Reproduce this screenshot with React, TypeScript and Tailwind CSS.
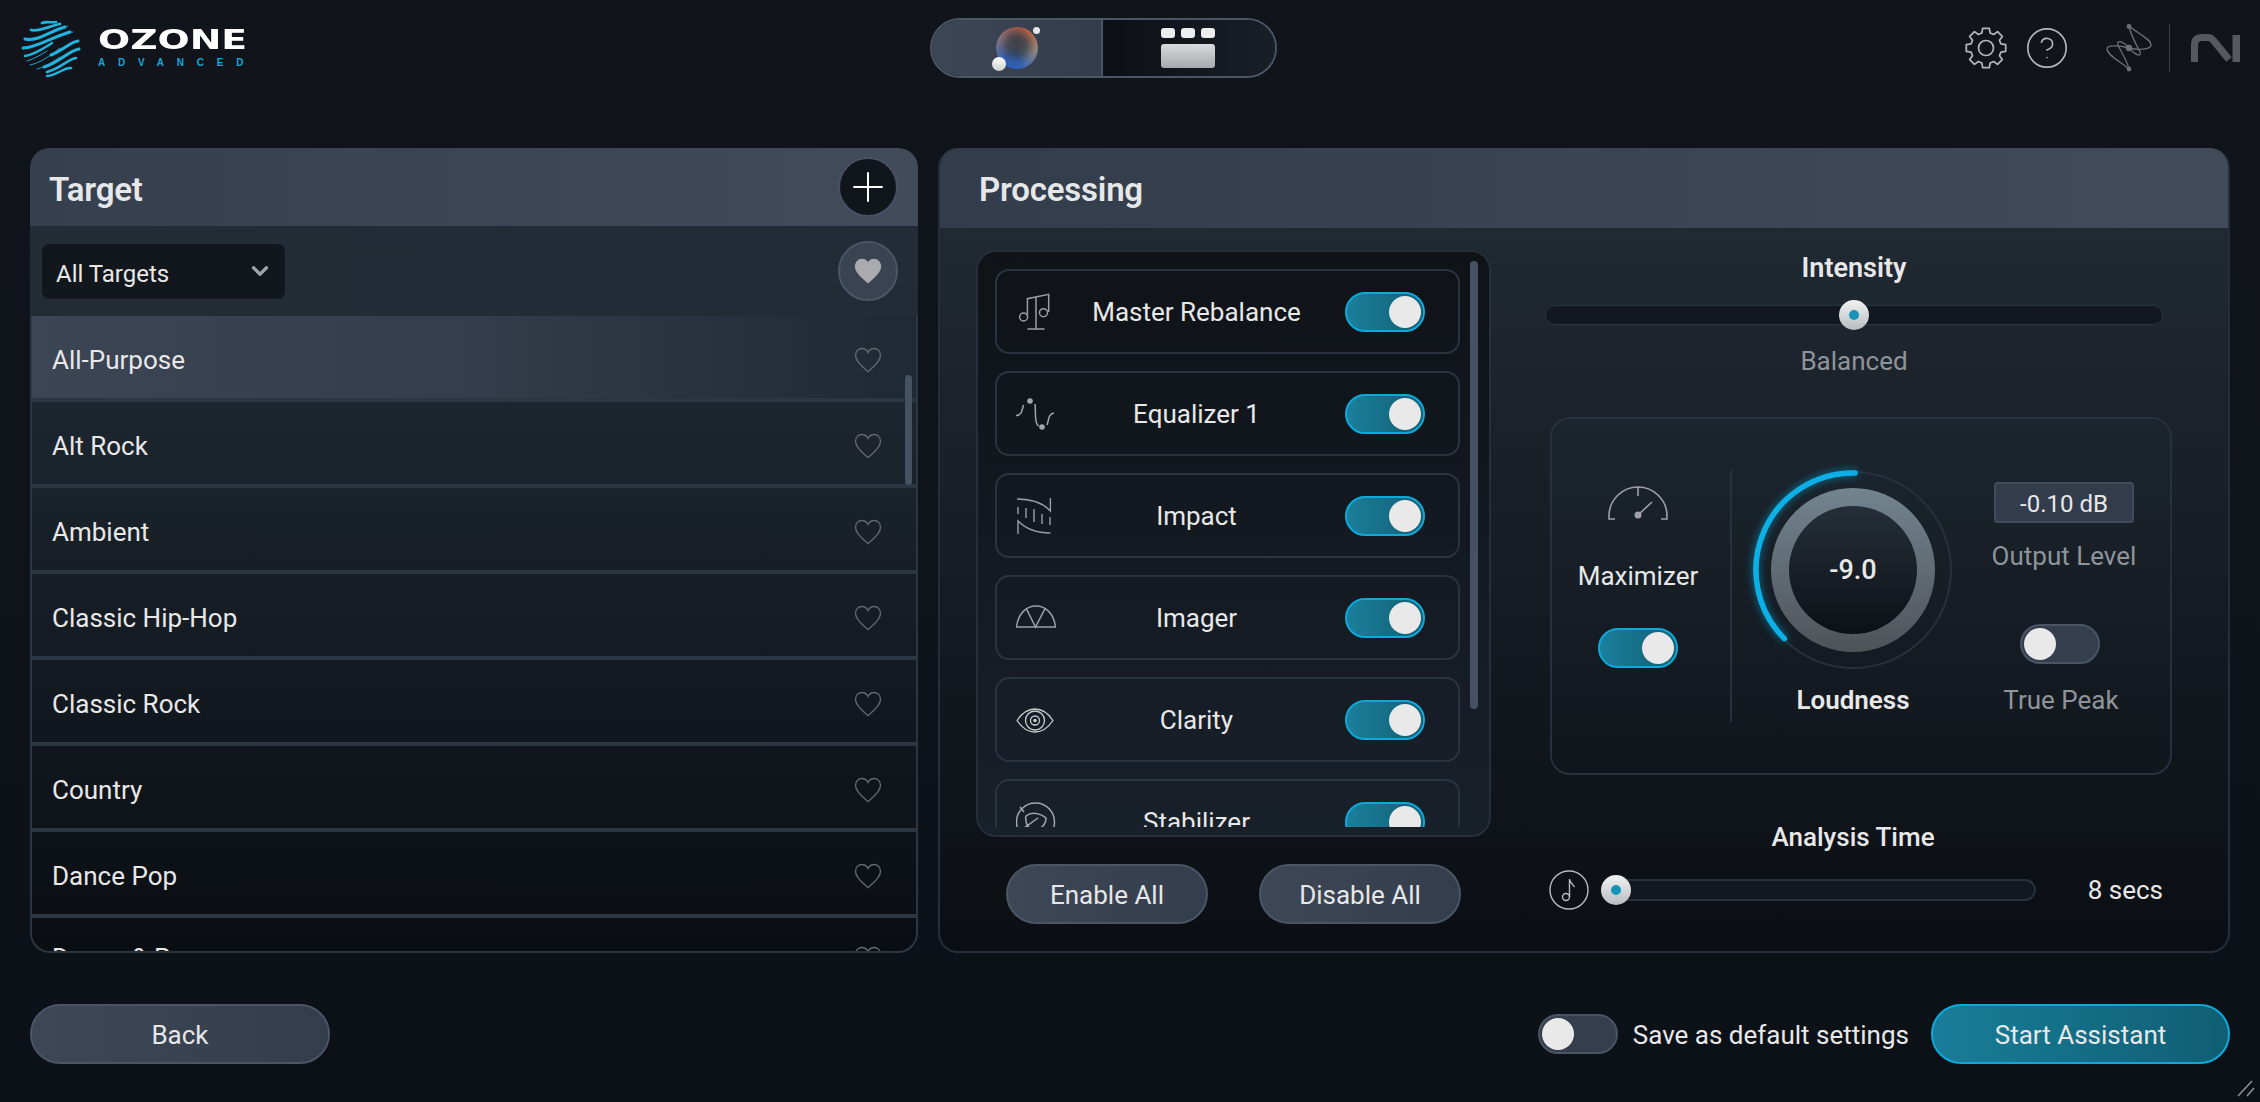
import { CircleHelp, ChevronDown, Plus } from "lucide-react";
import type { ReactNode } from "react";

const TARGETS = ["Alt Rock", "Ambient", "Classic Hip-Hop", "Classic Rock", "Country", "Dance Pop"];

function Toggle({ on = true }: { on?: boolean }) {
  return on ? (
    <div className="flex h-10 w-20 shrink-0 items-center justify-end rounded-full border-2 border-[#0ea9da] bg-gradient-to-r from-[#1b7f9b] to-[#125f75] pr-[2px]">
      <div className="size-8 rounded-full bg-[#e9e9e9]" />
    </div>
  ) : (
    <div className="flex h-10 w-20 shrink-0 items-center justify-start rounded-full border-2 border-[#495464] bg-[#353e4c] pl-[2px]">
      <div className="size-8 rounded-full bg-[#e9e9e9]" />
    </div>
  );
}

function Thumb() {
  return (
    <div className="flex size-[30px] shrink-0 items-center justify-center rounded-full bg-gradient-to-b from-[#f2f2f2] to-[#b9bdc1]">
      <div className="size-[10px] rounded-full bg-[#1793b8]" />
    </div>
  );
}

function PillButton({ children, w }: { children: ReactNode; w: string }) {
  return (
    <button className={`h-[60px] rounded-full border-2 border-[#4a5566] bg-gradient-to-r from-[#3e4755] to-[#343d4b] pt-[3px] text-[#e6e7e8] ${w}`}>
      {children}
    </button>
  );
}

function Heart({ filled = false }: { filled?: boolean }) {
  return (
    <svg width="28" height="26" viewBox="0 0 28 26" fill={filled ? "#a9abae" : "none"} stroke={filled ? "#a9abae" : "#62676d"} strokeWidth="1.4">
      <path d="M14 24.5C10 21 1.5 15 1.5 8.2C1.5 4.3 4.4 1.5 7.8 1.5C10.4 1.5 12.8 3 14 5.4C15.2 3 17.6 1.5 20.2 1.5C23.6 1.5 26.5 4.3 26.5 8.2C26.5 15 18 21 14 24.5Z" />
    </svg>
  );
}

function OzoneLogo() {
  return (
    <svg width="70" height="62" viewBox="17 17 70 62" fill="none" stroke="#22b4df" strokeLinecap="round">
      <path d="M42 22C47 20 51 22 56 21" strokeWidth="2.6" />
      <path d="M31 29C38 31 47 26 60 23" strokeWidth="2.8" />
      <path d="M25 38C38 41 50 30 65 26" strokeWidth="3" />
      <path d="M23 47C36 47 50 37 70 31" strokeWidth="3" />
      <path d="M25 55C36 53 44 47 52 42" strokeWidth="2.4" />
      <path d="M27 60C36 57 42 53 47 50" strokeWidth="0.9" />
      <path d="M48 33C58 28 63 26 68 25" strokeWidth="0.8" />
      <path d="M55 37C62 33 68 31 73 31" strokeWidth="0.8" />
      <path d="M30 64C40 62 50 55 60 47" strokeWidth="0.9" />
      <path d="M78 40C70 41 62 50 51 54" strokeWidth="3" />
      <path d="M79 48C68 50 60 61 44 66" strokeWidth="3" />
      <path d="M76 57C68 58 60 68 47 71" strokeWidth="2.6" />
      <path d="M71 67C64 66 58 74 47 75" strokeWidth="2.4" />
      <path d="M37 68C46 66 54 60 60 56" strokeWidth="0.8" />
    </svg>
  );
}

function gearPath() {
  const cx = 21;
  const cy = 21;
  const pts: string[] = [];
  for (let i = 0; i < 8; i++) {
    const a = (i * Math.PI) / 4 - Math.PI / 2;
    const p = (r: number, d: number) => `${(cx + r * Math.cos(a + d)).toFixed(2)} ${(cy + r * Math.sin(a + d)).toFixed(2)}`;
    pts.push(`${i === 0 ? "M" : "L"}${p(15.5, -0.27)}`);
    pts.push(`L${p(20, -0.17)}`);
    pts.push(`L${p(20, 0.17)}`);
    pts.push(`L${p(15.5, 0.27)}`);
  }
  return pts.join("") + "Z";
}

function GearIcon() {
  return (
    <svg width="42" height="42" viewBox="0 0 42 42" fill="none" stroke="#b4b6b8" strokeWidth="1.7" strokeLinejoin="round">
      <path d={gearPath()} />
      <circle cx="21" cy="21" r="7.5" />
    </svg>
  );
}

function SwirlIcon() {
  return (
    <svg width="48" height="48" viewBox="0 0 48 48" fill="none" stroke="#6c6f73" strokeWidth="1.3">
      <path d="M24 2C32 9 46 15 46 21C46 26 32 26 24 24C16 22 2 20 2 25C2 31 16 38 24 45" />
      <path d="M24 2C26 12 32 22 35 28C37 33 31 32 24 24C17 16 11 16 13 21C16 28 22 36 24 45" />
      <circle cx="24" cy="2.5" r="2.4" fill="#6c6f73" stroke="none" />
      <circle cx="24" cy="45" r="2.4" fill="#6c6f73" stroke="none" />
      <circle cx="24" cy="24" r="3.2" fill="#6c6f73" stroke="none" />
    </svg>
  );
}

function NiLogo() {
  return (
    <svg width="49" height="28" viewBox="0 0 49 28" fill="none">
      <path d="M3.5 28V11C3.5 6 6 3.5 11 3.5H17C19.5 3.5 21 4.5 22.5 6.5L38 25.5" stroke="#55585e" strokeWidth="7" />
      <rect x="41.5" y="1" width="7.5" height="27" fill="#55585e" />
    </svg>
  );
}

function IconMaster() {
  return (
    <svg width="40" height="40" viewBox="0 0 40 40" fill="none" stroke="#9a9ea3" strokeWidth="1.5">
      <circle cx="7.6" cy="25" r="4" />
      <circle cx="27.5" cy="20.7" r="4" />
      <path d="M11.4 24V6.7L32.7 2.3V20M20 5V37M11.4 37H28.6" />
    </svg>
  );
}

function IconEq() {
  return (
    <svg width="40" height="40" viewBox="0 0 40 40" fill="none" stroke="#a4a8ac" strokeWidth="1.5">
      <path d="M0 21.5C6 21.5 6 16 7.5 11M19 10C20 16 18 30 22.5 32M31 31C33 26 32 20 38 19" />
      <circle cx="14" cy="7" r="2.8" fill="#a4a8ac" stroke="none" />
      <circle cx="26" cy="33" r="2.8" fill="#a4a8ac" stroke="none" />
    </svg>
  );
}

function IconImpact() {
  return (
    <svg width="40" height="40" viewBox="0 0 40 40" fill="none" stroke="#9a9ea3" strokeWidth="1.4">
      <path d="M1 3C14 3 26 6 34.4 15V2M2 38V25C10 33 22 37 34.4 37" />
      <path d="M2 11V18M10 12V22M18 13V26M26 18V28M34 21V29" />
    </svg>
  );
}

function IconImager() {
  return (
    <svg width="40" height="40" viewBox="0 0 40 40" fill="none" stroke="#9a9ea3" strokeWidth="1.5">
      <path d="M0.5 29H39.5C38 16 30 8 20 8C10 8 2 16 0.5 29ZM10.3 10.7L19.5 29L29 10.7" />
    </svg>
  );
}

function IconClarity() {
  return (
    <svg width="40" height="40" viewBox="0 0 40 40" fill="none" stroke="#c9cbcd" strokeWidth="1.3">
      <path d="M1 20.5C6 13 12 9 19 9C26 9 32 13 37 20.5C32 28 26 32 19 32C12 32 6 28 1 20.5Z" />
      <circle cx="19" cy="20.5" r="9.5" />
      <circle cx="19" cy="20.5" r="4.5" />
      <circle cx="19" cy="20.5" r="1.8" fill="#c9cbcd" stroke="none" />
    </svg>
  );
}

function IconStabilizer() {
  return (
    <svg width="40" height="40" viewBox="0 0 40 40" fill="none" stroke="#a4a8ac" strokeWidth="1.5">
      <path d="M4 5L8 10" />
      <circle cx="19.5" cy="20" r="19" />
      <path d="M10 14C16 9 26 12 30 16C30 24 22 30 15 27C11 25 9 19 10 14ZM8 26L22 16" />
    </svg>
  );
}

function IconGauge() {
  return (
    <svg width="60" height="34" viewBox="0 0 60 34" fill="none" stroke="#9da1a6" strokeWidth="1.6">
      <path d="M7 33H1V30C1 14 14 1 30 1C46 1 59 14 59 30V33H53M30 1V10M30 29L44 16" />
      <circle cx="30" cy="29" r="3.5" fill="#9da1a6" stroke="none" />
    </svg>
  );
}

function IconNote() {
  return (
    <svg width="40" height="40" viewBox="0 0 40 40" fill="none" stroke="#b9bbbd" strokeWidth="1.4" className="shrink-0">
      <circle cx="20" cy="20" r="19" />
      <circle cx="17" cy="27" r="3.5" />
      <path d="M20.5 27V9C21 13 24 14 25.5 17" />
    </svg>
  );
}

function Knob() {
  return (
    <div className="relative flex size-[200px] shrink-0 items-center justify-center">
      <svg width="200" height="200" viewBox="0 0 200 200" fill="none" className="absolute inset-0 overflow-visible">
        <defs>
          <linearGradient id="metal" x1="0" y1="0" x2="0" y2="1">
            <stop offset="0" stopColor="#72848f" />
            <stop offset="1" stopColor="#4f5358" />
          </linearGradient>
          <linearGradient id="cap" x1="0" y1="0" x2="0" y2="1">
            <stop offset="0" stopColor="#252e38" />
            <stop offset="1" stopColor="#0c1116" />
          </linearGradient>
          <filter id="glow" x="-30%" y="-30%" width="160%" height="160%">
            <feGaussianBlur stdDeviation="4" />
          </filter>
        </defs>
        <circle cx="100" cy="100" r="98" stroke="#27313d" strokeWidth="2" />
        <path d="M31.4 168.6A97 97 0 0 1 102 3" stroke="#0cb0e6" strokeWidth="6" strokeLinecap="round" filter="url(#glow)" opacity="0.6" />
        <path d="M31.4 168.6A97 97 0 0 1 102 3" stroke="#0cb0e6" strokeWidth="5.5" strokeLinecap="round" />
        <circle cx="100" cy="100" r="82" fill="url(#metal)" />
        <circle cx="100" cy="100" r="64" fill="url(#cap)" />
      </svg>
      <span className="relative text-[27px] font-medium text-[#e8e8e8]">-9.0</span>
    </div>
  );
}

const MODULES = [
  { name: "Master Rebalance", icon: <IconMaster /> },
  { name: "Equalizer 1", icon: <IconEq /> },
  { name: "Impact", icon: <IconImpact /> },
  { name: "Imager", icon: <IconImager /> },
  { name: "Clarity", icon: <IconClarity /> },
  { name: "Stabilizer", icon: <IconStabilizer /> },
];

export default function App() {
  return (
    <div className="relative flex h-[1102px] w-[2260px] flex-col overflow-hidden bg-gradient-to-b from-[#11151b] to-[#0c1118] font-['Roboto',sans-serif] text-[26px] text-[#e8e8e8]">
      {/* top bar */}
      <header className="flex h-[148px] shrink-0 items-start">
        <div className="flex w-[930px] shrink-0 items-start pl-[17px] pt-[18px]">
          <OzoneLogo />
          <div className="ml-[11px] flex flex-col pt-[8px]">
            <span className="origin-left scale-x-[1.4] font-['DejaVu_Sans',sans-serif] text-[27px] leading-[28px] font-bold text-white">OZONE</span>
            <span className="mt-[2px] font-['Liberation_Sans',sans-serif] text-[10px] leading-[14px] font-bold tracking-[12.8px] text-[#12a7d8]">ADVANCED</span>
          </div>
        </div>

        <div className="mt-[18px] flex h-[60px] w-[347px] shrink-0 overflow-hidden rounded-full border-2 border-[#4a5566]">
          <div className="flex w-[171px] items-center justify-center border-r-2 border-[#4a5566] bg-gradient-to-r from-[#3d4654] to-[#333c4a]">
            <div className="relative size-[42px]">
              <div className="size-full rounded-full bg-[conic-gradient(from_30deg,#d0693f_0deg,#8a8780_70deg,#2f5fb5_140deg,#2f5fb5_200deg,#8c7680_270deg,#b85a3f_340deg,#d0693f_360deg)]" />
              <div className="absolute inset-0 rounded-full bg-[radial-gradient(circle_at_50%_42%,#39404c_0%,#39404cd0_28%,transparent_60%)]" />
              <div className="absolute bottom-[-2px] left-[-4px] size-[14px] rounded-full bg-gradient-to-b from-white to-[#cfcfcf]" />
              <div className="absolute right-[-2px] top-0 size-[7px] rounded-full bg-[#e6e6e6]" />
            </div>
          </div>
          <div className="flex flex-1 items-center justify-center bg-gradient-to-r from-[#0c1015] to-[#191f27] pr-[2px]">
            <div className="flex w-[54px] flex-col gap-[6px]">
              <div className="flex justify-between">
                <div className="h-[10px] w-[14px] rounded-[3px] bg-[#eceded]" />
                <div className="h-[10px] w-[14px] rounded-[3px] bg-[#eceded]" />
                <div className="h-[10px] w-[14px] rounded-[3px] bg-[#eceded]" />
              </div>
              <div className="h-[24px] rounded-[3px] bg-gradient-to-b from-[#d9dbdd] to-[#a7aaad]" />
            </div>
          </div>
        </div>

        <div className="flex flex-1 items-center justify-end gap-[17px] pr-[20px] pt-[24px]">
          <GearIcon />
          <CircleHelp size={46} strokeWidth={0.85} color="#b4b6b8" />
          <div className="ml-[18px]">
            <SwirlIcon />
          </div>
          <div className="-mx-px h-[48px] w-px bg-[#3b3e43]" />
          <div className="ml-[5px]">
            <NiLogo />
          </div>
        </div>
      </header>

      {/* panels */}
      <main className="flex h-[805px] shrink-0 gap-[20px] pl-[30px] pr-[30px]">
        <section className="flex w-[888px] shrink-0 flex-col overflow-hidden rounded-[20px] bg-[#232c36]">
          <div className="flex h-[78px] shrink-0 items-center justify-between bg-gradient-to-r from-[#363f4d] to-[#414b59] pl-[19px] pr-[20px]">
            <span className="pt-[5px] text-[33px] font-semibold tracking-[-0.2px] text-[#e6e7e8]">Target</span>
            <div className="flex size-[60px] items-center justify-center rounded-full border-2 border-[#465264] bg-[#11161d]">
              <Plus size={48} strokeWidth={1} color="#ffffff" />
            </div>
          </div>
          <div className="flex h-[90px] shrink-0 items-center justify-between bg-gradient-to-r from-[#222c35] to-[#232c36] pl-[11px] pr-[20px]">
            <div className="flex h-[57px] w-[245px] items-center justify-between rounded-[8px] border border-[#262f3a] bg-[#12171e] pl-[14px] pr-[12px]">
              <span className="pt-[5px] text-[24px]">All Targets</span>
              <ChevronDown size={26} strokeWidth={3} color="#a0a3a8" />
            </div>
            <div className="flex size-[60px] items-center justify-center rounded-full border-2 border-[#4a5566] bg-[#3a4352]">
              <Heart filled />
            </div>
          </div>

          <div className="relative flex min-h-0 flex-1 flex-col overflow-hidden rounded-b-[20px] border-x-2 border-b-2 border-[#2b3643] bg-gradient-to-b from-[#202a33] to-[#0a0e13]">
            <div className="flex h-[86px] shrink-0 items-center justify-between border-b-4 border-[#2b3643] bg-gradient-to-r from-[#3b4554] via-[#333d4b] to-[#1f2933] pl-[20px] pr-[34px] pt-[6px]">
              <span>All-Purpose</span>
              <Heart />
            </div>
            {TARGETS.map((t) => (
              <div key={t} className="flex h-[86px] shrink-0 items-center justify-between border-b-4 border-[#2b3643] pl-[20px] pr-[34px] pt-[6px]">
                <span>{t}</span>
                <Heart />
              </div>
            ))}
            {/* next row, only the top edge shows above the panel's end */}
            <div className="flex h-[86px] shrink-0 items-center justify-between pb-[5px] pl-[20px] pr-[34px]">
              <span>Dance &amp; Pop</span>
              <Heart />
            </div>
            <div className="absolute right-[4px] top-[59px] h-[110px] w-[7px] rounded-full bg-[#465264]" />
          </div>
        </section>

        <section className="flex min-w-0 flex-1 flex-col overflow-hidden rounded-[20px] border-2 border-t-0 border-[#252e39] bg-gradient-to-b from-[#232c36] to-[#0b0f14]">
          <div className="flex h-[80px] shrink-0 items-center bg-gradient-to-r from-[#333c4a] to-[#414b59] pl-[39px]">
            <span className="pt-[4px] text-[33px] font-semibold tracking-[-0.2px] text-[#e6e7e8]">Processing</span>
          </div>
          <div className="flex min-h-0 flex-1">
            {/* module list */}
            <div className="ml-[36px] mt-[22px] flex w-[515px] shrink-0 flex-col">
              <div className="relative h-[587px] overflow-hidden rounded-[20px] border-2 border-[#252e39] bg-gradient-to-b from-[#0f1318] to-[#18202a] pb-[10px] pl-[17px] pt-[17px]">
                <div className="flex h-[558px] w-[465px] flex-col gap-[17px] overflow-hidden">
                  {MODULES.map((m) => (
                    <div key={m.name} className="flex h-[85px] shrink-0 items-center rounded-[14px] border-2 border-[#2a3340] pl-[19px] pr-[33px]">
                      <div className="-mr-2 w-10 shrink-0">{m.icon}</div>
                      <span className="flex-1 pt-[2px] text-center">{m.name}</span>
                      <Toggle />
                    </div>
                  ))}
                </div>
                <div className="absolute right-[11px] top-[9px] h-[448px] w-[8px] rounded-full bg-[#465264]" />
              </div>
              <div className="mt-[27px] flex justify-between pl-[30px] pr-[30px]">
                <PillButton w="w-[202px]">Enable All</PillButton>
                <PillButton w="w-[202px]">Disable All</PillButton>
              </div>
            </div>

            {/* right column */}
            <div className="ml-[54px] flex w-[627px] shrink-0 flex-col items-start">
              <div className="mt-[26px] w-[618px] text-center text-[27px] font-semibold leading-[28px] text-[#e8e8e8]">Intensity</div>
              <div className="mt-[23px] flex h-5 w-[618px] items-center justify-center rounded-full border border-[#2a3440] bg-[#12181f]">
                <Thumb />
              </div>
              <div className="mt-[22px] w-[618px] text-center leading-[28px] text-[#8f949b]">Balanced</div>

              <div className="ml-[5px] mt-[42px] flex h-[358px] w-[622px] shrink-0 items-start rounded-[20px] border-2 border-[#27313d] bg-gradient-to-b from-[#1c252e] to-[#11161c]">
                <div className="mr-[6px] flex w-[172px] shrink-0 flex-col items-center pt-[67px]">
                  <IconGauge />
                  <span className="mt-[42px] leading-[28px]">Maximizer</span>
                  <div className="mt-[38px]">
                    <Toggle />
                  </div>
                </div>
                <div className="mt-[51px] h-[252px] w-[2px] shrink-0 bg-[#27313d]" />
                <div className="ml-[21px] mt-[51px] flex shrink-0 flex-col items-center">
                  <Knob />
                  <span className="mt-[16px] font-semibold leading-[28px]">Loudness</span>
                </div>
                <div className="ml-[41px] mt-[63px] flex w-[140px] shrink-0 flex-col items-center">
                  <div className="flex h-[41px] w-[140px] items-center justify-center rounded-[4px] border-2 border-[#414b5a] bg-[#333c4a] pt-[2px] text-[24px]">-0.10 dB</div>
                  <span className="mt-[19px] whitespace-nowrap leading-[28px] text-[#8f949b]">Output Level</span>
                  <div className="mr-[8px] mt-[54px]">
                    <Toggle on={false} />
                  </div>
                  <span className="mr-[6px] mt-[22px] whitespace-nowrap leading-[28px] text-[#8f949b]">True Peak</span>
                </div>
              </div>

              <div className="mt-[48px] w-[616px] text-center font-medium leading-[28px]">Analysis Time</div>
              <div className="mt-[19px] flex w-[618px] items-center pl-[4px]">
                <IconNote />
                <div className="ml-[12px] flex h-[22px] w-[435px] items-center rounded-full border-2 border-[#27313d] bg-[#12181f]">
                  <div className="-ml-[2px]">
                    <Thumb />
                  </div>
                </div>
                <span className="flex-1 text-right">8 secs</span>
              </div>
            </div>
          </div>
        </section>
      </main>

      {/* footer */}
      <footer className="flex flex-1 items-start justify-between pl-[30px] pr-[30px] pt-[51px]">
        <PillButton w="w-[300px]">Back</PillButton>
        <div className="flex items-center">
          <Toggle on={false} />
          <span className="ml-[15px] pt-[3px]">Save as default settings</span>
          <button className="ml-[22px] h-[60px] w-[299px] rounded-full border-2 border-[#0ea9da] bg-gradient-to-r from-[#197d99] to-[#0f5e73] pt-[3px] text-[#e8e8e8]">Start Assistant</button>
        </div>
      </footer>

      {/* resize grip */}
      <svg width="20" height="20" viewBox="0 0 20 20" fill="none" stroke="#8f9499" strokeWidth="1.5" className="absolute bottom-[3px] right-[3px]">
        <path d="M1 17L15 2M10 17L17 9" />
      </svg>
    </div>
  );
}
